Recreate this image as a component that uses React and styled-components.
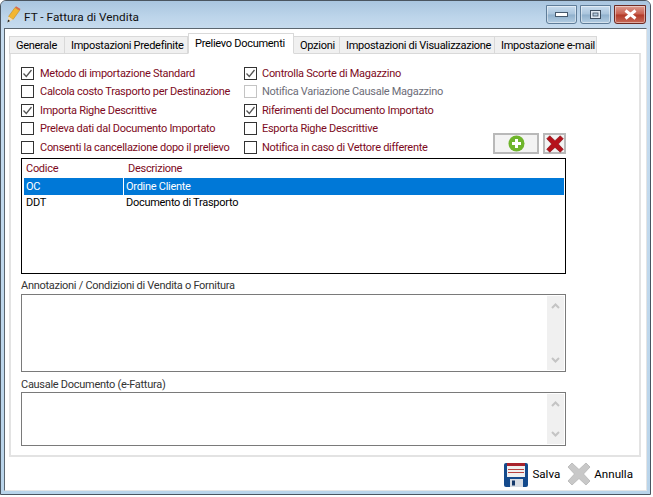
import React from "react";
import styled, { createGlobalStyle } from "styled-components";

const GlobalStyle = createGlobalStyle`
  html, body {
    margin: 0;
    padding: 0;
    background: #fff;
  }
  body {
    font-family: Roboto, "Liberation Sans", Arial, sans-serif;
    font-size: 11px;
    letter-spacing: -0.28px;
    color: #000;
  }
`;

const Window = styled.div`
  width: 651px;
  height: 495px;
  box-sizing: border-box;
  display: flex;
  flex-direction: column;
  border: 1px solid #4a5560;
  border-radius: 6px 6px 0 0;
  background: linear-gradient(#b4cde4, #c6dcef 30px, #b9d4ea);
  overflow: hidden;
`;

const TitleBar = styled.div`
  height: 27px;
  flex: none;
  display: flex;
  align-items: flex-start;
  background: linear-gradient(#a9c5df, #bdd5ea 60%, #c6dbee);
`;

const TitleIcon = styled.svg`
  width: 18px;
  height: 18px;
  margin: 5px 0 0 5px;
  flex: none;
`;

const TitleText = styled.div`
  margin: 9px 0 0 0;
  font-size: 11.8px;
  letter-spacing: 0;
  line-height: 14px;
  color: #111;
  flex: 1;
`;

const WinButton = styled.div`
  width: ${({ $w }) => $w}px;
  height: 19px;
  margin: 4px ${({ $gap }) => $gap}px 0 0;
  box-sizing: border-box;
  border: 1px solid ${({ $close }) => ($close ? "#6e2a22" : "#5f7d99")};
  border-radius: 0 0 3px 3px;
  background: ${({ $close }) =>
    $close
      ? "linear-gradient(#dc9c90, #c9604f 48%, #b23a28 52%, #c76a58)"
      : "linear-gradient(#c8dcee, #a9c4dc 48%, #8fb0cc 52%, #b4cde2)"};
  box-shadow: inset 0 0 0 1px rgba(255, 255, 255, 0.45);
  display: flex;
  align-items: center;
  justify-content: center;
  flex: none;
`;

const Client = styled.div`
  flex: 1;
  margin: 0 3px 3px 3px;
  border: 1px solid #5c6770;
  border-bottom-color: #e4e4e4;
  border-right-color: #e4e4e4;
  background: #fff;
  display: flex;
  flex-direction: column;
  padding: 4px 3px 0 4px;
  min-height: 0;
`;

const TabStrip = styled.div`
  display: flex;
  align-items: flex-end;
  height: 21px;
  flex: none;
  position: relative;
  z-index: 1;
  margin-bottom: -1px;
`;

const Tab = styled.div`
  width: ${({ $w }) => $w}px;
  height: ${({ $active }) => ($active ? 21 : 18)}px;
  box-sizing: border-box;
  border: 1px solid #d9d9d9;
  border-left-width: ${({ $first, $active }) => ($first || $active ? 1 : 0)}px;
  border-bottom-color: ${({ $active }) => ($active ? "#fff" : "#d9d9d9")};
  background: ${({ $active }) => ($active ? "#fff" : "#f0f0f0")};
  padding: ${({ $active }) => ($active ? 3 : 2)}px 0 0 6px;
  line-height: 14px;
  white-space: nowrap;
  flex: none;
`;

const Panel = styled.div`
  width: 632px;
  height: 404px;
  box-sizing: border-box;
  flex: none;
  border: 2px solid #e3e3e3;
  border-top-width: 1px;
  border-top-color: #d9d9d9;
  padding: 10px 0 0 10px;
  display: flex;
  flex-direction: column;
`;

const OptionsArea = styled.div`
  display: grid;
  grid-template-columns: 223px 225px 97px;
  width: 545px;
  height: 92px;
`;

const OptionColumn = styled.div`
  display: flex;
  flex-direction: column;
  justify-content: space-between;
`;

const Option = styled.label`
  display: flex;
  align-items: center;
  height: 18px;
  color: ${({ $disabled }) => ($disabled ? "#6d6d78" : "#7d0a22")};
  white-space: nowrap;
`;

const CheckBox = styled.span`
  width: 13px;
  height: 13px;
  box-sizing: border-box;
  border: 1px solid ${({ $disabled }) => ($disabled ? "#c4c4c4" : "#333")};
  background: #fff;
  margin-right: ${({ $gap }) => $gap || 6}px;
  flex: none;
  display: flex;
  align-items: center;
  justify-content: center;
`;

const RowButtons = styled.div`
  display: flex;
  align-items: flex-end;
  justify-content: flex-end;
  gap: 4px;
  margin-left: -60px;
  padding-bottom: 2px;
`;

const IconButton = styled.div`
  width: ${({ $w }) => $w}px;
  height: 21px;
  box-sizing: border-box;
  border: 2px solid #b9b9b9;
  background: #f3f3f3;
  display: flex;
  align-items: center;
  justify-content: center;
  flex: none;
`;

const List = styled.div`
  width: 545px;
  height: 116px;
  box-sizing: border-box;
  margin-top: 2px;
  border: 1px solid #000;
  flex: none;
  background: #fff;
  padding: 2px 2px 0 2px;
`;

const ListRow = styled.div`
  display: grid;
  grid-template-columns: 100px 1fr;
  width: 540px;
  height: ${({ $h }) => $h}px;
  line-height: ${({ $h, $header }) => ($header ? $h - 1 : $h + 1)}px;
  color: ${({ $header }) => ($header ? "#7d0a22" : "#000")};
  margin-bottom: ${({ $mb }) => $mb || 0}px;
`;

const ListCell = styled.div`
  padding-left: ${({ $pl }) => $pl}px;
  background: ${({ $selected }) => ($selected ? "#0078d7" : "transparent")};
  color: ${({ $selected }) => ($selected ? "#fff" : "inherit")};
  margin-right: ${({ $mr }) => $mr || 0}px;
`;

const FieldLabel = styled.div`
  margin-top: ${({ $mt }) => $mt}px;
  height: 14px;
  line-height: 14px;
  color: #333;
  flex: none;
`;

const MemoBox = styled.div`
  width: 545px;
  height: ${({ $h }) => $h}px;
  margin-top: ${({ $mt }) => $mt}px;
  box-sizing: border-box;
  border: 1px solid #7a7a7a;
  background: #fff;
  display: flex;
  justify-content: flex-end;
  flex: none;
`;

const ScrollTrack = styled.div`
  width: 17px;
  margin: 1px;
  background: #f0f0f0;
  display: flex;
  flex-direction: column;
  justify-content: space-between;
  align-items: center;
  padding: 6px 0;
`;

const Footer = styled.div`
  flex: 1;
  display: flex;
  justify-content: flex-end;
  align-items: flex-start;
  padding: 5px 10px 0 0;
`;

const FooterAction = styled.div`
  display: flex;
  align-items: center;
  height: 24px;
  font-size: 11.6px;
  letter-spacing: 0;
  margin-left: ${({ $ml }) => $ml || 0}px;
`;

const FooterIcon = styled.svg`
  width: 24px;
  height: 24px;
  margin: 2px 4px 0 0;
  flex: none;
`;

const ActionLabel = styled.span`
  margin-left: 3px;
`;

const Tick = () => (
  <svg width="11" height="11" viewBox="0 0 11 11">
    <path d="M1.5 5.5 L4.3 8.5 L9.5 2" fill="none" stroke="#555" strokeWidth="1.3" />
  </svg>
);

const Chevron = ({ down }) => (
  <svg width="9" height="7" viewBox="0 0 9 7">
    <path
      d={down ? "M1 1 L4.5 4.5 L8 1" : "M1 6 L4.5 2.5 L8 6"}
      fill="none"
      stroke="#c4c4c4"
      strokeWidth="2"
    />
  </svg>
);

const Pencil = () => (
  <TitleIcon viewBox="0 0 18 18">
    <path d="M2.5 10.5 L9 1.5 L13.5 4.5 L7 13.5 Z" fill="#f2b632" stroke="#c08a24" strokeWidth="0.6" />
    <path d="M9 1.5 L10 0.2 L14.5 3 L13.5 4.5 Z" fill="#d9694a" />
    <path d="M1.5 16.5 L2.5 10.5 L7 13.5 Z" fill="#f4dcb0" />
    <path d="M1.5 16.5 L2 13.5 L4 15 Z" fill="#222" />
  </TitleIcon>
);

const Floppy = () => (
  <FooterIcon viewBox="0 0 24 24">
    <rect x="0" y="0" width="24" height="24" rx="2" fill="#144a8c" />
    <rect x="3" y="0" width="18" height="3" fill="#a8232c" />
    <rect x="3" y="3" width="18" height="11" fill="#f0f0f0" />
    <path d="M4 6.5 H20 M4 9.5 H20" stroke="#b8433f" strokeWidth="1" />
    <rect x="6" y="16" width="13" height="8" fill="#d8dde4" />
    <rect x="8" y="17.5" width="3" height="5" fill="#14386a" />
  </FooterIcon>
);

const CrossShape = ({ fill, size, stroke }) => (
  <svg width={size} height={size} viewBox="0 0 24 24">
    <path
      d="M5 1 L12 7.5 L19 1 L23 5 L16.5 12 L23 19 L19 23 L12 16.5 L5 23 L1 19 L7.5 12 L1 5 Z"
      fill={fill}
      stroke={stroke}
      strokeWidth="0.8"
    />
  </svg>
);

const PlusIcon = () => (
  <svg width="17" height="17" viewBox="0 0 17 17">
    <circle cx="8.5" cy="8.5" r="8" fill="#6fb52c" />
    <path d="M8.5 4 V13 M4 8.5 H13" stroke="#fff" strokeWidth="3" />
  </svg>
);

const tabs = [
  { label: "Generale", w: 56 },
  { label: "Impostazioni Predefinite", w: 123 },
  { label: "Prelievo Documenti", w: 106, active: true },
  { label: "Opzioni", w: 46 },
  { label: "Impostazioni di Visualizzazione", w: 155 },
  { label: "Impostazione e-mail", w: 102 },
];

const leftOptions = [
  { label: "Metodo di importazione Standard", checked: true },
  { label: "Calcola costo Trasporto per Destinazione" },
  { label: "Importa Righe Descrittive", checked: true },
  { label: "Preleva dati dal Documento Importato" },
  { label: "Consenti la cancellazione dopo il prelievo" },
];

const rightOptions = [
  { label: "Controlla Scorte di Magazzino", checked: true },
  { label: "Notifica Variazione Causale Magazzino", disabled: true },
  { label: "Riferimenti del Documento Importato", checked: true },
  { label: "Esporta Righe Descrittive" },
  { label: "Notifica in caso di Vettore differente" },
];

function OptionItem({ label, checked, disabled, gap }) {
  return (
    <Option $disabled={disabled}>
      <CheckBox $disabled={disabled} $gap={gap}>
        {checked && <Tick />}
      </CheckBox>
      {label}
    </Option>
  );
}

function ScrollBar() {
  return (
    <ScrollTrack>
      <Chevron />
      <Chevron down />
    </ScrollTrack>
  );
}

export default function App() {
  return (
    <>
      <GlobalStyle />
      <Window>
        <TitleBar>
          <Pencil />
          <TitleText>FT - Fattura di Vendita</TitleText>
          <WinButton $w={31} $gap={3}>
            <svg width="13" height="5" viewBox="0 0 13 5">
              <rect x="0.5" y="0.5" width="12" height="4" fill="#fff" stroke="#45586c" />
            </svg>
          </WinButton>
          <WinButton $w={31} $gap={3}>
            <svg width="11" height="9" viewBox="0 0 11 9">
              <rect x="0.5" y="0.5" width="10" height="8" fill="#dfe9f3" stroke="#3d4e60" />
              <rect x="3" y="3" width="5" height="3" fill="#b3cbe0" stroke="#3d4e60" strokeWidth="0.8" />
            </svg>
          </WinButton>
          <WinButton $w={32} $gap={4} $close>
            <svg width="15" height="11" viewBox="0 0 15 11">
              <path d="M2.5 1.5 L12.5 9.5 M12.5 1.5 L2.5 9.5" stroke="#fff" strokeWidth="3" />
            </svg>
          </WinButton>
        </TitleBar>
        <Client>
          <TabStrip>
            {tabs.map((t, i) => (
              <Tab key={t.label} $w={t.w} $active={t.active} $first={i === 0}>
                {t.label}
              </Tab>
            ))}
          </TabStrip>
          <Panel>
            <OptionsArea>
              <OptionColumn>
                {leftOptions.map((o) => (
                  <OptionItem key={o.label} {...o} />
                ))}
              </OptionColumn>
              <OptionColumn>
                {rightOptions.map((o) => (
                  <OptionItem key={o.label} {...o} gap={5} />
                ))}
              </OptionColumn>
              <RowButtons>
                <IconButton $w={46}>
                  <PlusIcon />
                </IconButton>
                <IconButton $w={23}>
                  <CrossShape fill="#b5121b" stroke="#7d0a10" size={18} />
                </IconButton>
              </RowButtons>
            </OptionsArea>
            <List>
              <ListRow $header $h={17}>
                <ListCell $pl={2}>Codice</ListCell>
                <ListCell $pl={4}>Descrizione</ListCell>
              </ListRow>
              <ListRow $h={16} $mb={1}>
                <ListCell $selected $pl={2} $mr={1}>OC</ListCell>
                <ListCell $selected $pl={2}>Ordine Cliente</ListCell>
              </ListRow>
              <ListRow $h={15}>
                <ListCell $pl={2}>DDT</ListCell>
                <ListCell $pl={2}>Documento di Trasporto</ListCell>
              </ListRow>
            </List>
            <FieldLabel $mt={5}>Annotazioni / Condizioni di Vendita o Fornitura</FieldLabel>
            <MemoBox $h={78} $mt={1}>
              <ScrollBar />
            </MemoBox>
            <FieldLabel $mt={6}>Causale Documento (e-Fattura)</FieldLabel>
            <MemoBox $h={54} $mt={0}>
              <ScrollBar />
            </MemoBox>
          </Panel>
          <Footer>
            <FooterAction>
              <Floppy />
              Salva
            </FooterAction>
            <FooterAction $ml={7}>
              <CrossShape fill="#c8c8c8" stroke="#b5b5b5" size={24} />
              <ActionLabel>Annulla</ActionLabel>
            </FooterAction>
          </Footer>
        </Client>
      </Window>
    </>
  );
}
